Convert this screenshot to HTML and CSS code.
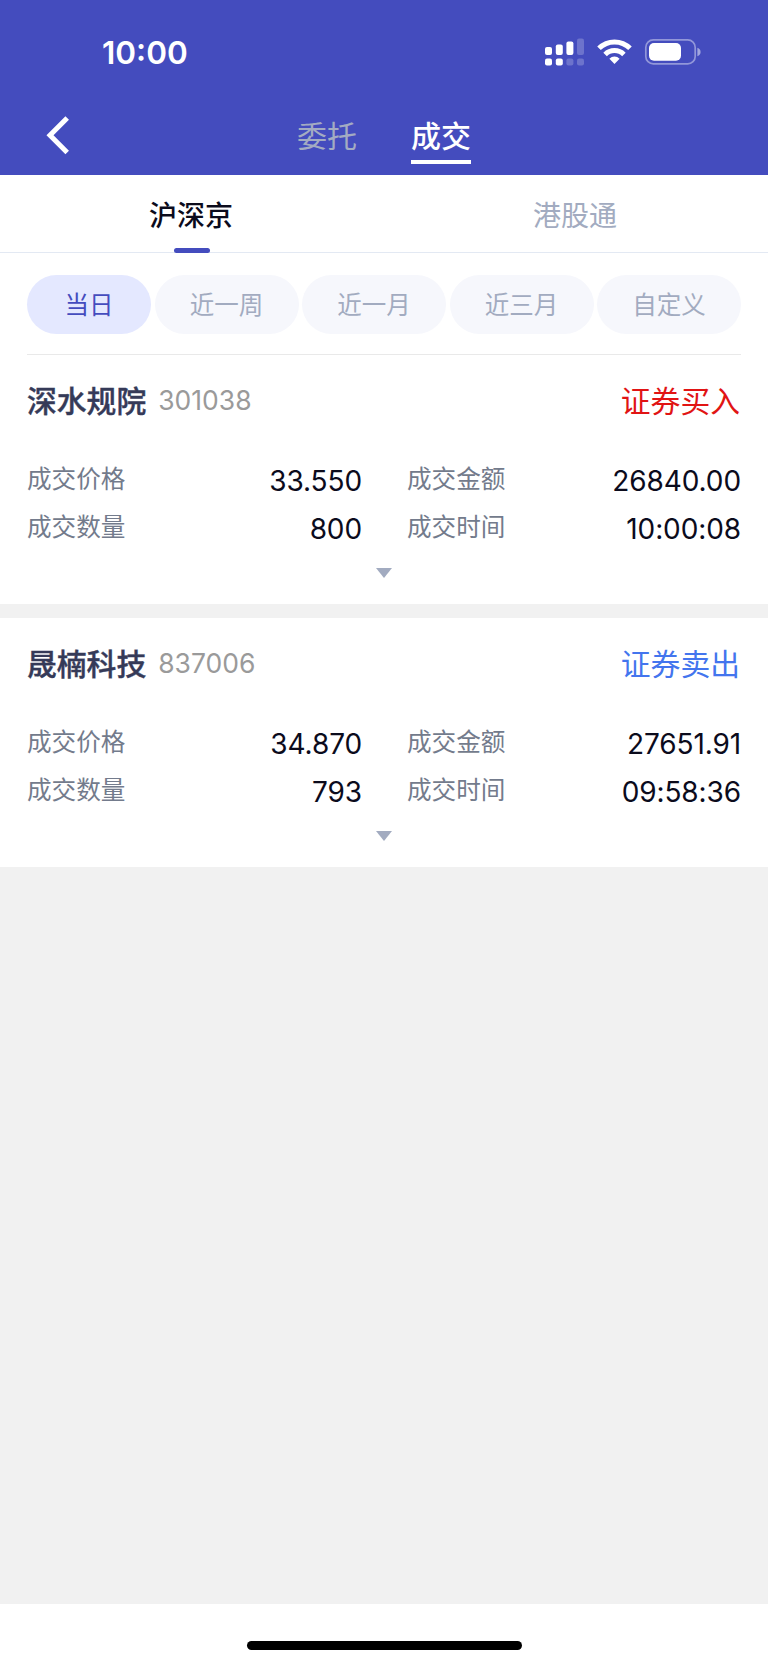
FILE: index.html
```
<!DOCTYPE html>
<html lang="zh-CN">
<head>
    <meta charset="UTF-8">
    <meta name="viewport" content="width=device-width, initial-scale=1.0">
    <title>成交</title>
    <link rel="stylesheet" href="styles.css">
</head>
<body>
    <header class="header">
        <div class="status-bar">
            <span class="clock">10:00</span>
            <svg class="status-icons" width="160" height="32" viewBox="0 0 160 32" fill="#fff">
                <!-- signal -->
                <rect x="3" y="11" width="7" height="8" rx="2"/>
                <rect x="13.8" y="8.6" width="7" height="10.4" rx="2"/>
                <rect x="24.4" y="5.5" width="7" height="13.5" rx="2"/>
                <rect x="35" y="2.5" width="7" height="16.5" rx="2" opacity=".22"/>
                <rect x="3" y="22.5" width="7" height="7" rx="2"/>
                <rect x="13.8" y="22.5" width="7" height="7" rx="2"/>
                <rect x="24.4" y="22.5" width="7" height="7" rx="2" opacity=".22"/>
                <rect x="35" y="22.5" width="7" height="7" rx="2" opacity=".22"/>
                <!-- wifi -->
                <g fill="none" stroke="#fff" stroke-width="5">
                    <path d="M57 12.3a22 22 0 0 1 31 0"/>
                    <path d="M63.1 18.4a13.3 13.3 0 0 1 18.8 0"/>
                </g>
                <path d="M67.4 22.7a7.3 7.3 0 0 1 10.2 0L72.5 28z"/>
                <!-- battery -->
                <rect x="103.8" y="3.9" width="49.4" height="24" rx="7.5" fill="none" stroke="#fff" stroke-width="1.7" opacity=".42"/>
                <rect x="107" y="7" width="32" height="17.8" rx="5"/>
                <path d="M155.4 11.8q3.2 1.2 3.2 4.2t-3.2 4.2z" opacity=".5"/>
            </svg>
        </div>
        <nav class="nav">
            <svg class="back" width="26" height="40" viewBox="0 0 26 40">
                <path d="M23.2 3 6 20.2 23.2 37.4" fill="none" stroke="#fff" stroke-width="5"/>
            </svg>
            <span class="nav-tab">委托</span>
            <span class="nav-tab nav-active">成交</span>
        </nav>
    </header>

    <div class="market">
        <div class="market-tab market-active">沪深京</div>
        <div class="market-tab">港股通</div>
    </div>

    <div class="filters">
        <span class="pill pill-active">当日</span>
        <span class="pill">近一周</span>
        <span class="pill">近一月</span>
        <span class="pill">近三月</span>
        <span class="pill">自定义</span>
    </div>

    <main class="list">
        <section class="card">
            <div class="card-head">
                <span class="name">深水规院</span>
                <span class="stock-code">301038</span>
                <span class="side buy">证券买入</span>
            </div>
            <div class="grid">
                <div class="item"><span class="label">成交价格</span><span class="value">33.550</span></div>
                <div class="item"><span class="label">成交金额</span><span class="value">26840.00</span></div>
                <div class="item"><span class="label">成交数量</span><span class="value">800</span></div>
                <div class="item"><span class="label">成交时间</span><span class="value">10:00:08</span></div>
            </div>
            <div class="arrow"></div>
        </section>

        <section class="card">
            <div class="card-head">
                <span class="name">晟楠科技</span>
                <span class="stock-code">837006</span>
                <span class="side sell">证券卖出</span>
            </div>
            <div class="grid">
                <div class="item"><span class="label">成交价格</span><span class="value">34.870</span></div>
                <div class="item"><span class="label">成交金额</span><span class="value">27651.91</span></div>
                <div class="item"><span class="label">成交数量</span><span class="value">793</span></div>
                <div class="item"><span class="label">成交时间</span><span class="value">09:58:36</span></div>
            </div>
            <div class="arrow"></div>
        </section>
    </main>

    <footer class="bottom">
        <div class="home-bar"></div>
    </footer>
</body>
</html>
```
FILE: styles.css
```
* {
    box-sizing: border-box;
}
body {
    margin: 0;
    height: 1665px;
    display: flex;
    flex-direction: column;
    background-color: #f1f1f1;
    font-family: Inter, "Noto Sans CJK SC", sans-serif;
    color: #0b0b1c;
}
.header {
    height: 174.5px;
    background-color: #444cbe;
    color: #fff;
}
.status-bar {
    height: 104px;
    padding: 0 66px 0 102px;
    display: flex;
    align-items: center;
    justify-content: space-between;
}
.clock {
    padding-top: 2px;
    font-size: 31.5px;
    font-weight: 600;
    line-height: 40px;
}
.nav {
    display: flex;
    height: 60px;
    padding-left: 44px;
}
.back {
    margin: 11px 227px 0 0;
}
.nav-tab {
    height: 59.5px;
    margin-right: 54px;
    font-size: 30px;
    line-height: 64px;
    color: #a3abc2;
}
.nav-active {
    border-bottom: 4px solid #fff;
    font-weight: 500;
    color: #fff;
}
.market {
    display: flex;
    height: 78.5px;
    background-color: #fff;
    border-bottom: 1px solid #e3e9f3;
}
.market-tab {
    flex: 1;
    padding-right: 2px;
    font-size: 28px;
    line-height: 82px;
    text-align: center;
    color: #a2abc0;
}
.market-active {
    position: relative;
    font-weight: 500;
    color: #0b0b1c;
}
/* marker sits over the bottom border */
.market-active::after {
    content: "";
    position: absolute;
    left: 50%;
    bottom: -1px;
    width: 36px;
    height: 5px;
    margin-left: -18.5px;
    border-radius: 3px;
    background-color: #444cbe;
}
.filters {
    display: flex;
    gap: 3.5px;
    height: 101px;
    padding: 22px 27px 0;
    background-color: #fff;
}
.pill {
    flex: 1;
    height: 58.5px;
    border-radius: 30px;
    background-color: #f6f7fc;
    font-size: 24.5px;
    line-height: 60px;
    text-align: center;
    color: #a2abc0;
}
.pill-active {
    flex: 0 0 124px;
    background-color: #e4e8ff;
    color: #444cbe;
}
.list {
    flex: 1;
}
.card {
    height: 248.5px;
    margin-bottom: 14px;
    padding: 0 27px;
    background-color: #fff;
}
.card:first-child {
    height: 250px;
    background: linear-gradient(#e9e9e9, #e9e9e9) 27px 0 / 714px 1px no-repeat #fff;
    padding-top: 1px;
}
.card-head {
    display: flex;
    align-items: center;
    height: 88px;
}
.name {
    font-size: 29.8px;
    font-weight: 500;
    color: #353a58;
    -webkit-text-stroke: 0.4px #353a58;
}
.stock-code {
    margin: 2px 0 0 12px;
    font-size: 26.5px;
    color: #9a9a9a;
}
.side {
    margin: 0 1px 0 auto;
    font-size: 29.8px;
}
.buy {
    color: #e11414;
}
.sell {
    color: #4375ee;
}
.grid {
    display: grid;
    grid-template-columns: 335px 334px;
    grid-auto-rows: 48px;
    column-gap: 45px;
    padding-top: 11.5px;
}
.item {
    display: flex;
    justify-content: space-between;
    line-height: 48px;
}
.label {
    font-size: 24.6px;
    color: #737b8c;
}
.value {
    padding-top: 2px;
    font-size: 28px;
    letter-spacing: -0.1px;
}
.arrow {
    width: 16px;
    height: 10px;
    margin: 17.5px auto 0;
    background-color: #a2abc0;
    clip-path: polygon(0 0, 100% 0, 50% 100%);
}
.bottom {
    height: 61.5px;
    padding-top: 37.5px;
    background-color: #fff;
}
.home-bar {
    width: 275px;
    height: 9px;
    margin: 0 auto;
    border-radius: 5px;
    background-color: #000;
}
```
